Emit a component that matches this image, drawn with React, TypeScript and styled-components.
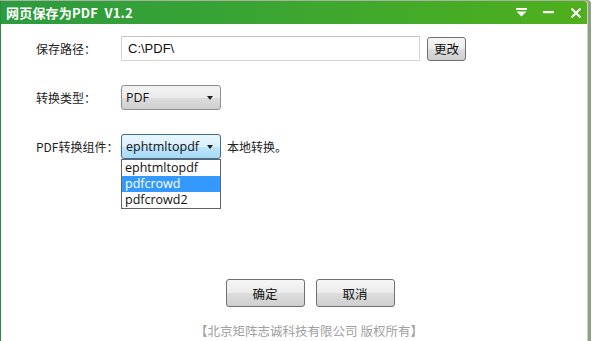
import styled, { createGlobalStyle } from 'styled-components';

const GlobalStyle = createGlobalStyle`
  html, body {
    margin: 0;
    padding: 0;
    background: #ffffff;
  }
  body {
    font-family: "Noto Sans CJK SC", "Liberation Sans", sans-serif;
    font-size: 12px;
    color: #1a1a1a;
  }
`;

const Window = styled.div`
  width: 588px;
  height: 341px;
  box-sizing: border-box;
  border-left: 1px solid #2f8a3c;
  border-right: 1px solid #c8d2c0;
  box-shadow: 3px 0 0 #8f9f86;
  border-top: 1px solid #a9b3a3;
  background: #ffffff;
  display: flex;
  flex-direction: column;
  overflow: hidden;
  border-top-right-radius: 4px;
`;

const TitleBar = styled.div`
  height: 23px;
  flex: none;
  display: flex;
  align-items: center;
  padding: 0 4px 0 5px;
  background: linear-gradient(90deg, #2c9b3e 0%, #3aa532 45%, #4fb01c 100%);
  color: #ffffff;
`;

const Title = styled.div`
  flex: 1;
  font-weight: bold;
  font-size: 13px;
  letter-spacing: 0.2px;
  white-space: pre;
`;

const TitleIcons = styled.div`
  display: flex;
  align-items: center;
  gap: 12px;
`;

const IconBox = styled.span`
  width: 15px;
  height: 15px;
  display: flex;
  align-items: center;
  justify-content: center;
`;

const Form = styled.div`
  display: flex;
  flex-direction: column;
  gap: 24px;
  padding: 12px 0 0 35px;
`;

const Row = styled.div`
  display: flex;
  align-items: center;
  height: 25px;
`;

const Label = styled.div`
  width: 85px;
  flex: none;
  font-size: 12px;
  white-space: nowrap;
  color: #222;
`;

const TextInput = styled.div`
  width: 299px;
  height: 25px;
  box-sizing: border-box;
  border: 1px solid #d4d4d4;
  border-top-color: #c4c4c4;
  padding: 0 6px;
  display: flex;
  align-items: center;
  font-family: "Liberation Sans", sans-serif;
  font-size: 13px;
  color: #111;
`;

const SmallButton = styled.div`
  margin-left: 7px;
  width: 39px;
  height: 24px;
  box-sizing: border-box;
  border: 1px solid #707070;
  border-radius: 3px;
  background: linear-gradient(#f6f6f6 0%, #ebebeb 50%, #dcdcdc 51%, #cfcfcf 100%);
  display: flex;
  align-items: center;
  justify-content: center;
  font-size: 12.5px;
  color: #111;
`;

const SelectWrap = styled.div`
  position: relative;
`;

const Select = styled.div<{ $active?: boolean }>`
  width: 100px;
  height: 25px;
  box-sizing: border-box;
  border: 1px solid ${p => (p.$active ? '#3c6f95' : '#8e8f8f')};
  border-radius: 3px;
  background: ${p =>
    p.$active
      ? 'linear-gradient(#eaf6fd 0%, #d9f0fc 50%, #bee6fd 51%, #a7d9f5 100%)'
      : 'linear-gradient(#f2f2f2 0%, #ebebeb 50%, #dddddd 51%, #cfcfcf 100%)'};
  display: flex;
  align-items: center;
  justify-content: space-between;
  padding: 0 7px 0 4px;
  font-family: "Open Sans", "Liberation Sans", sans-serif;
  font-size: 12.5px;
  color: #111;
`;

const Arrow = styled.span`
  width: 0;
  height: 0;
  border-left: 3.5px solid transparent;
  border-right: 3.5px solid transparent;
  border-top: 4px solid #222;
`;

const List = styled.div`
  position: absolute;
  top: 25px;
  left: 0;
  width: 100px;
  box-sizing: border-box;
  border: 1px solid #646464;
  background: #ffffff;
  z-index: 2;
`;

const ListItem = styled.div<{ $selected?: boolean }>`
  height: 16px;
  line-height: 16px;
  overflow: hidden;
  padding-left: 3px;
  font-family: "Open Sans", "Liberation Sans", sans-serif;
  font-size: 12.5px;
  background: ${p => (p.$selected ? '#3399ff' : 'transparent')};
  color: ${p => (p.$selected ? '#ffffff' : '#111')};
`;

const Note = styled.div`
  margin-left: 6px;
  font-size: 12px;
  white-space: nowrap;
  color: #222;
`;

const Buttons = styled.div`
  margin-top: 120px;
  display: flex;
  justify-content: center;
  gap: 11px;
  padding-left: 32px;
`;

const Button = styled.div`
  width: 79px;
  height: 28px;
  box-sizing: border-box;
  border: 1px solid #707070;
  border-radius: 3px;
  background: linear-gradient(#f6f6f6 0%, #ebebeb 50%, #dddddd 51%, #cfcfcf 100%);
  display: flex;
  align-items: center;
  justify-content: center;
  font-size: 12.5px;
  color: #111;
`;

const Footer = styled.div`
  margin-top: 14px;
  text-align: center;
  padding-left: 30px;
  font-size: 12.5px;
  color: #a0a0a0;
`;

export default function App() {
  return (
    <>
      <GlobalStyle />
      <Window>
        <TitleBar>
          <Title>{'网页保存为PDF  V1.2'}</Title>
          <TitleIcons>
            <IconBox>
              <svg width="11" height="9" viewBox="0 0 11 9">
                <rect x="0" y="0" width="11" height="2" fill="#fff" />
                <path d="M0.5 3.5 H10.5 L5.5 8.5 Z" fill="#fff" />
              </svg>
            </IconBox>
            <IconBox>
              <svg width="11" height="3" viewBox="0 0 11 3">
                <rect x="0" y="0" width="11" height="2.2" fill="#fff" />
              </svg>
            </IconBox>
            <IconBox>
              <svg width="12" height="12" viewBox="0 0 12 12">
                <path d="M1.5 1.5 L10.5 10.5 M10.5 1.5 L1.5 10.5" stroke="#fff" strokeWidth="2" />
              </svg>
            </IconBox>
          </TitleIcons>
        </TitleBar>
        <Form>
          <Row>
            <Label>保存路径：</Label>
            <TextInput>C:\PDF\</TextInput>
            <SmallButton>更改</SmallButton>
          </Row>
          <Row>
            <Label>转换类型：</Label>
            <Select>
              PDF
              <Arrow />
            </Select>
          </Row>
          <Row>
            <Label>PDF转换组件：</Label>
            <SelectWrap>
              <Select $active>
                ephtmltopdf
                <Arrow />
              </Select>
              <List>
                <ListItem>ephtmltopdf</ListItem>
                <ListItem $selected>pdfcrowd</ListItem>
                <ListItem>pdfcrowd2</ListItem>
              </List>
            </SelectWrap>
            <Note>本地转换。</Note>
          </Row>
        </Form>
        <Buttons>
          <Button>确定</Button>
          <Button>取消</Button>
        </Buttons>
        <Footer>【北京矩阵志诚科技有限公司 版权所有】</Footer>
      </Window>
    </>
  );
}
